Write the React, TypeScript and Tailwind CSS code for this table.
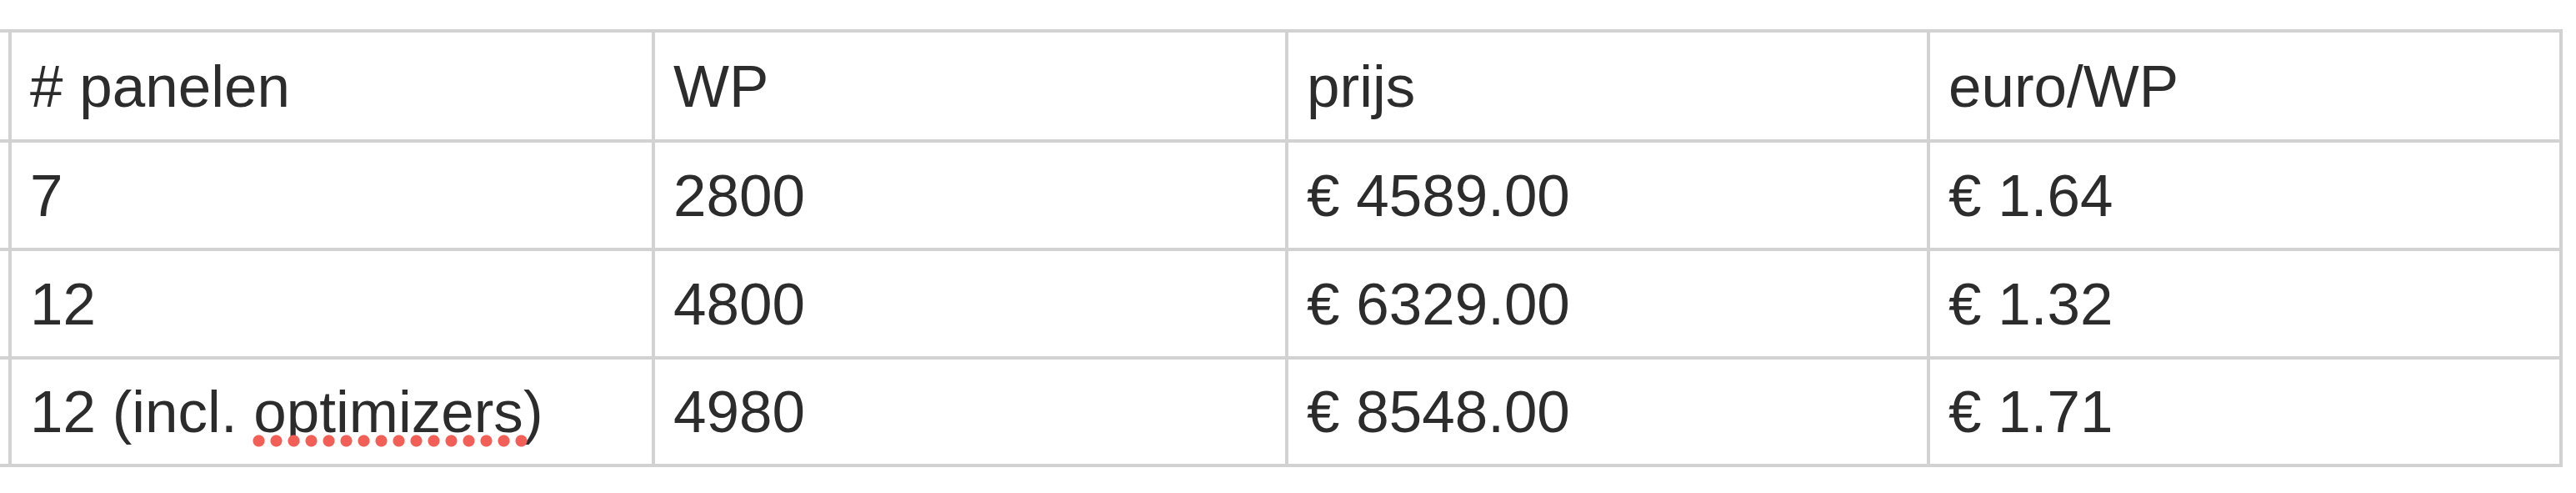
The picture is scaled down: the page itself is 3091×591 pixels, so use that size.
import React from 'react';

type Row = {
  panelen: React.ReactNode;
  wp: string;
  prijs: string;
  euroPerWp: string;
  height: string;
};

const cellBase =
  'border-[4px] border-[#d2d2d2] pl-[22px] pr-2 align-middle whitespace-nowrap';

// red dotted spellcheck squiggle under a word
const Misspelled: React.FC<{ children: React.ReactNode }> = ({ children }) => (
  <span className="relative">
    {children}
    <span className="absolute left-[-4px] right-[-8px] bottom-[-3px] h-[15px] bg-[radial-gradient(circle,_#f25f57_6.5px,_transparent_7.5px)] bg-[length:21px_15px] bg-repeat-x" />
  </span>
);

const rows: Row[] = [
  { panelen: '7', wp: '2800', prijs: '€ 4589.00', euroPerWp: '€ 1.64', height: 'h-[130px]' },
  { panelen: '12', wp: '4800', prijs: '€ 6329.00', euroPerWp: '€ 1.32', height: 'h-[130px]' },
  {
    panelen: (
      <>
        12 (incl. <Misspelled>optimizers</Misspelled>)
      </>
    ),
    wp: '4980',
    prijs: '€ 8548.00',
    euroPerWp: '€ 1.71',
    height: 'h-[129px]',
  },
];

export default function App() {
  return (
    <div className="w-[3091px] h-[591px] bg-white overflow-hidden pt-[35px]">
      <table className="border-collapse table-fixed font-['Liberation_Sans',Arial,sans-serif] text-[71px] leading-none text-[#2c2c2c]">
        <colgroup>
          <col className="w-[12px]" />
          <col className="w-[772px]" />
          <col className="w-[760px]" />
          <col className="w-[770px]" />
          <col className="w-[759px]" />
        </colgroup>
        <thead>
          <tr className="h-[132px]">
            <th className="border-y-[4px] border-[#d2d2d2] p-0" />
            <th className={`${cellBase} text-left font-normal`}># panelen</th>
            <th className={`${cellBase} text-left font-normal`}>WP</th>
            <th className={`${cellBase} text-left font-normal`}>prijs</th>
            <th className={`${cellBase} text-left font-normal`}>euro/WP</th>
          </tr>
        </thead>
        <tbody>
          {rows.map((row, i) => (
            <tr key={i} className={row.height}>
              <td className="border-y-[4px] border-[#d2d2d2] p-0" />
              <td className={cellBase}>{row.panelen}</td>
              <td className={cellBase}>{row.wp}</td>
              <td className={cellBase}>{row.prijs}</td>
              <td className={cellBase}>{row.euroPerWp}</td>
            </tr>
          ))}
        </tbody>
      </table>
    </div>
  );
}
